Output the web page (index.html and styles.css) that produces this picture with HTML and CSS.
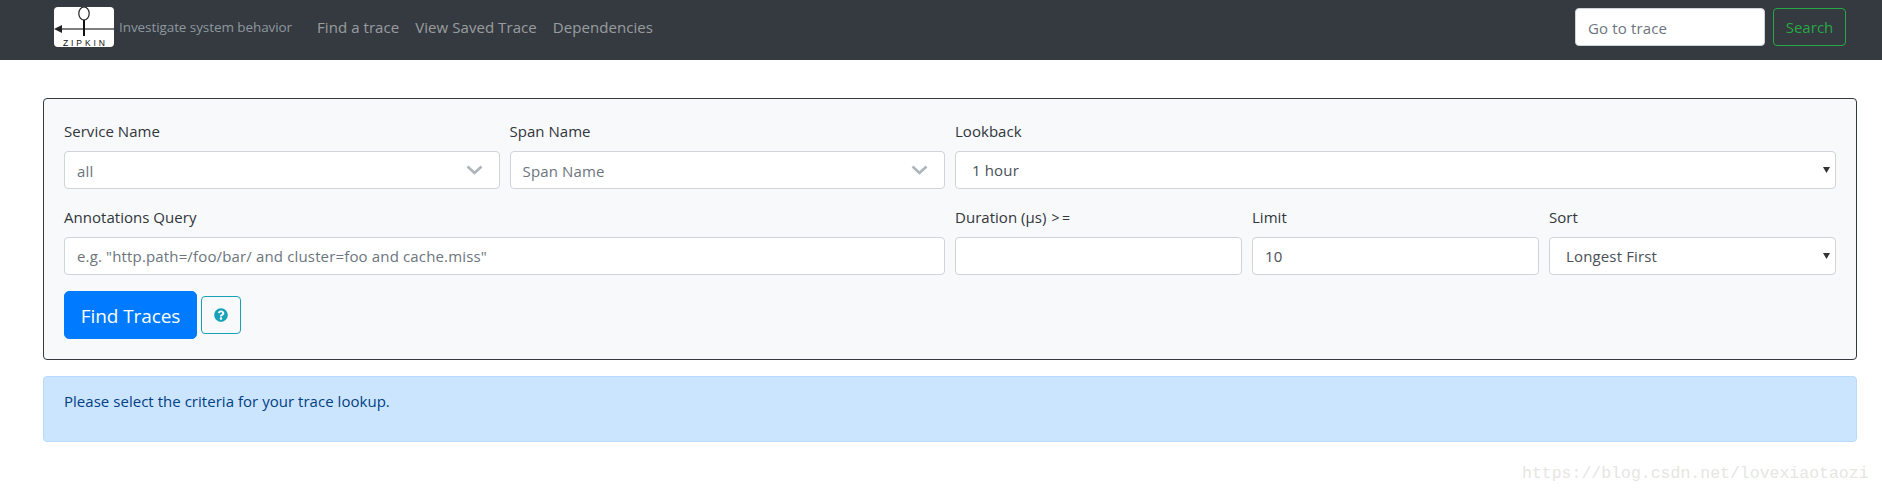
FILE: index.html
```html
<!DOCTYPE html>
<html lang="en">
<head>
<meta charset="utf-8">
<title>Zipkin</title>
<link rel="stylesheet" href="styles.css">
</head>
<body>
<nav class="navbar">
  <a class="brand" href="#">
    <svg class="logo" width="60" height="40" viewBox="0 0 60 40">
      <rect width="60" height="40" rx="4" fill="#fff"/>
      <path d="M6 22H60" stroke="#555" stroke-width="1.6"/>
      <path d="M0 22L8 18V26Z" fill="#222"/>
      <ellipse cx="30" cy="6.5" rx="5.2" ry="6.5" fill="#fff" stroke="#222" stroke-width="1.2"/>
      <path d="M30 13V29" stroke="#111" stroke-width="2"/>
      <text class="logo-text" x="9" y="39">ZIPKIN</text>
    </svg>
    <span class="tagline">Investigate system behavior</span>
  </a>
  <ul class="nav-links">
    <li><a href="#">Find a trace</a></li>
    <li><a href="#">View Saved Trace</a></li>
    <li><a href="#">Dependencies</a></li>
  </ul>
  <form class="nav-search">
    <input class="control trace-input" type="text" placeholder="Go to trace">
    <button class="search-btn" type="button">Search</button>
  </form>
</nav>

<main class="page">
  <form class="panel">
    <div class="grid">
      <div class="field span-3">
        <label>Service Name</label>
        <div class="select-wrap">
          <select class="control chosen"><option>all</option></select>
          <svg class="chevron" width="17" height="10" viewBox="0 0 17 10"><path d="M1.5 1.5L8.5 8L15.5 1.5"/></svg>
        </div>
      </div>
      <div class="field span-3">
        <label>Span Name</label>
        <div class="select-wrap">
          <select class="control chosen"><option>Span Name</option></select>
          <svg class="chevron" width="17" height="10" viewBox="0 0 17 10"><path d="M1.5 1.5L8.5 8L15.5 1.5"/></svg>
        </div>
      </div>
      <div class="field span-6">
        <label>Lookback</label>
        <div class="select-wrap">
          <select class="control native"><option>1 hour</option></select>
          <svg class="caret" width="7" height="6" viewBox="0 0 7 6"><path d="M0 0H7L3.5 6Z"/></svg>
        </div>
      </div>
      <div class="field span-6">
        <label>Annotations Query</label>
        <input class="control" type="text" placeholder="e.g. &quot;http.path=/foo/bar/ and cluster=foo and cache.miss&quot;">
      </div>
      <div class="field span-2">
        <label>Duration (μs) <span class="op">&gt;=</span></label>
        <input class="control" type="text">
      </div>
      <div class="field span-2">
        <label>Limit</label>
        <input class="control" type="text" value="10">
      </div>
      <div class="field span-2">
        <label>Sort</label>
        <div class="select-wrap">
          <select class="control native"><option>Longest First</option></select>
          <svg class="caret" width="7" height="6" viewBox="0 0 7 6"><path d="M0 0H7L3.5 6Z"/></svg>
        </div>
      </div>
    </div>
    <div class="actions">
      <button class="find-btn" type="button">Find Traces</button>
      <button class="help-btn" type="button" aria-label="Help">
        <svg width="14" height="14" viewBox="0 0 512 512"><path d="M504 256c0 136.997-111.043 248-248 248S8 392.997 8 256C8 119.083 119.043 8 256 8s248 111.083 248 248zM262.655 90c-54.497 0-89.255 22.957-116.549 63.758-3.536 5.286-2.353 12.415 2.715 16.258l34.699 26.31c5.205 3.947 12.621 3.008 16.665-2.122 17.864-22.658 30.113-35.797 57.303-35.797 20.429 0 45.698 13.148 45.698 32.958 0 14.976-12.363 22.667-32.534 33.976C247.128 238.528 216 254.941 216 296v4c0 6.627 5.373 12 12 12h56c6.627 0 12-5.373 12-12v-1.333c0-28.462 83.186-29.647 83.186-106.667 0-58.002-60.165-102-116.531-102zM256 338c-25.365 0-46 20.635-46 46 0 25.364 20.635 46 46 46s46-20.636 46-46c0-25.365-20.635-46-46-46z"/></svg>
      </button>
    </div>
  </form>
  <div class="alert">
    <p>Please select the criteria for your trace lookup.</p>
  </div>
</main>
<div class="watermark">https://blog.csdn.net/lovexiaotaozi</div>
</body>
</html>
```

FILE: styles.css
```css
* { box-sizing: border-box; }
html, body { margin: 0; }
body {
  position: relative;
  height: 493px;
  overflow: hidden;
  background: #fff;
  color: #212529;
  font-family: "Open Sans", "Noto Sans", "Liberation Sans", sans-serif;
  font-size: 15px;
  line-height: 24px;
  letter-spacing: 0.03px;
}
a { text-decoration: none; color: inherit; }

.navbar {
  display: flex;
  align-items: center;
  height: 60px;
  padding: 0 36px 0 54px;
  background: #343a40;
}
.brand { display: flex; align-items: center; }
.logo { display: block; margin-top: -6px; }
.logo-text {
  font-family: "Liberation Sans", sans-serif;
  font-size: 8.5px;
  letter-spacing: 2.9px;
  fill: #111;
}
.tagline {
  margin-left: 5px;
  margin-top: -6px;
  font-size: 13.5px;
  letter-spacing: -0.08px;
  color: #8f979e;
}
.nav-links {
  display: flex;
  gap: 16px;
  margin: -7px 0 0 25px;
  padding: 0;
  list-style: none;
  letter-spacing: 0.06px;
  color: rgba(255, 255, 255, .5);
}
.nav-search {
  display: flex;
  gap: 8px;
  margin-left: auto;
  margin-top: -6px;
}
.search-btn {
  width: 73px;
  height: 38px;
  padding: 0;
  border: 1px solid #28a745;
  border-radius: 4px;
  background: transparent;
  color: #28a745;
  font: inherit;
  letter-spacing: inherit;
}

.control {
  display: block;
  width: 100%;
  height: 38px;
  padding: 0 12px;
  border: 1px solid #ced4da;
  border-radius: 4px;
  background: #fff;
  color: #495057;
  font: inherit;
  letter-spacing: 0.15px;
  appearance: none;
  outline: none;
}
.control::placeholder { color: #6c757d; opacity: 1; }
.control.native { padding-left: 16px; }
.control.chosen { padding-top: 2px; color: #6c757d; }
.control.trace-input { width: 190px; padding-top: 2px; }

.page { padding: 38px 25px 0 43px; }
.panel {
  padding: 20px;
  height: 262px;
  border: 1px solid #343a40;
  border-radius: 4px;
  background: #f8f9fa;
}
.grid {
  display: grid;
  grid-template-columns: repeat(12, 1fr);
  column-gap: 10px;
  row-gap: 16px;
}
.span-2 { grid-column: span 2; }
.span-3 { grid-column: span 3; }
.span-6 { grid-column: span 6; }
.field label { display: block; height: 32px; line-height: 24px; color: #30363c; }
.op { margin-left: 1px; letter-spacing: 2.6px; font-size: 14px; }
.select-wrap { position: relative; }
.chevron {
  position: absolute;
  right: 17px;
  top: 14px;
  fill: none;
  stroke: #adb5bd;
  stroke-width: 2.6;
}
.caret { position: absolute; right: 6px; top: 16px; fill: #333; }

.actions { display: flex; align-items: center; gap: 4px; margin-top: 16px; }
.find-btn {
  width: 133px;
  height: 48px;
  padding: 2px 0 0;
  border: 1px solid #007bff;
  border-radius: 5px;
  background: #007bff;
  color: #fff;
  font: inherit;
  font-size: 19px;
  letter-spacing: -0.1px;
}
.help-btn {
  display: flex;
  align-items: center;
  justify-content: center;
  width: 40px;
  height: 38px;
  padding: 0;
  border: 1px solid #17a2b8;
  border-radius: 4px;
  background: transparent;
  fill: #17a2b8;
}

.alert {
  height: 66px;
  margin-top: 16px;
  padding: 12px 20px;
  border: 1px solid #b8daff;
  border-radius: 4px;
  background: #cce5ff;
  color: #004085;
}
.alert p { margin: 0; }

.watermark {
  position: absolute;
  left: 1522px;
  top: 464px;
  font-family: "Liberation Mono", monospace;
  font-size: 16.5px;
  line-height: 20px;
  letter-spacing: 0;
  color: #e6e6e3;
}
```
